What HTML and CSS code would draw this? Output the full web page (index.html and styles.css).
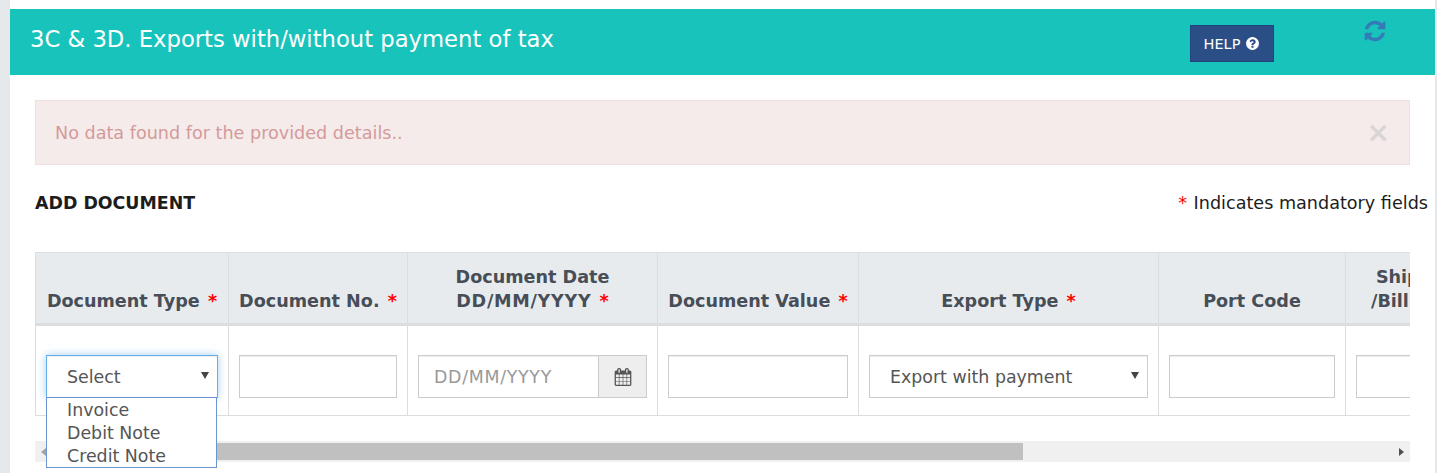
FILE: index.html
```html
<!DOCTYPE html>
<html lang="en">

<head>
    <meta charset="utf-8">
    <meta name="viewport" content="width=device-width, initial-scale=1.0">
    <title>Exports with/without payment of tax</title>
    <link rel="stylesheet" href="styles.css">
</head>

<body>
    <main class="panel">
        <header class="panel-head">
            <h1>3C &amp; 3D. Exports with/without payment of tax</h1>
            <button class="help-btn">HELP
                <svg class="help-icon" viewBox="0 0 1792 1792"><path fill="currentColor" d="M1024 1376v-192q0-14-9-23t-23-9h-192q-14 0-23 9t-9 23v192q0 14 9 23t23 9h192q14 0 23-9t9-23zm256-672q0-88-55.500-163t-138.500-116-170-41q-243 0-371 213-15 24 8 42l132 100q7 6 19 6 16 0 25-12 53-68 86-92 34-24 86-24 48 0 85.500 26t37.500 59q0 38-20 61t-68 45q-63 28-115.500 86.500t-52.500 125.500v36q0 14 9 23t23 9h192q14 0 23-9t9-23q0-19 21.500-49.500t54.500-49.500q32-18 49-28.500t46-35 44.500-48 28-60.500 12.500-81zm384 192q0 209-103 385.500t-279.500 279.500-385.500 103-385.500-103-279.500-279.500-103-385.500 103-385.500 279.500-279.500 385.500-103 385.500 103 279.500 279.500 103 385.500z"/></svg>
            </button>
            <svg class="refresh-icon" viewBox="0 0 1792 1792"><path fill="currentColor" d="M1639 1056q0 5-1 7-64 268-268 434.500t-478 166.500q-146 0-282.500-55t-243.500-157l-129 129q-19 19-45 19t-45-19-19-45v-448q0-26 19-45t45-19h448q26 0 45 19t19 45-19 45l-137 137q71 66 161 102t187 36q134 0 250-65t186-179q11-17 53-117 8-23 30-23h192q13 0 22.500 9.500t9.500 22.500zm25-800v448q0 26-19 45t-45 19h-448q-26 0-45-19t-19-45 19-45l138-138q-148-137-349-137-134 0-250 65t-186 179q-11 17-53 117-8 23-30 23h-199q-13 0-22.500-9.500t-9.500-22.500v-7q65-268 270-434.500t480-166.500q146 0 284 55.500t245 156.500l130-129q19-19 45-19t45 19 19 45z"/></svg>
        </header>

        <section class="content">
            <div class="alert">
                <span>No data found for the provided details..</span>
                <span class="alert-close">×</span>
            </div>

            <div class="form-title">
                <h2>ADD DOCUMENT</h2>
                <p><span class="req">*</span> Indicates mandatory fields</p>
            </div>

            <div class="table-wrap">
                <table class="doc-table">
                    <colgroup>
                        <col class="col-type">
                        <col class="col-no">
                        <col class="col-date">
                        <col class="col-value">
                        <col class="col-export">
                        <col class="col-port">
                        <col class="col-bill">
                    </colgroup>
                    <thead>
                        <tr>
                            <th>Document Type <span class="req">*</span></th>
                            <th>Document No. <span class="req">*</span></th>
                            <th>Document Date<br><span class="date-format">DD/MM/YYYY</span> <span class="req">*</span></th>
                            <th>Document Value <span class="req">*</span></th>
                            <th>Export Type <span class="req">*</span></th>
                            <th>Port Code</th>
                            <th>Shipping Bill<br>/Bill of Export</th>
                        </tr>
                    </thead>
                    <tbody>
                        <tr>
                            <td>
                                <div class="field select focused">Select<i class="caret"></i></div>
                            </td>
                            <td><input class="field" type="text"></td>
                            <td>
                                <div class="date-group">
                                    <input class="field" type="text" placeholder="DD/MM/YYYY">
                                    <span class="date-addon">
                                        <svg class="cal-icon" viewBox="0 0 1792 1792"><path fill="currentColor" d="M192 1664h288v-288h-288v288zm352 0h320v-288h-320v288zm-352-352h288v-320h-288v320zm352 0h320v-320h-320v320zm-352-384h288v-288h-288v288zm736 736h320v-288h-320v288zm-384-736h320v-288h-320v288zm768 736h288v-288h-288v288zm-384-352h320v-320h-320v320zm-352-864v-288q0-13-9.500-22.500t-22.500-9.500h-64q-13 0-22.500 9.500t-9.500 22.500v288q0 13 9.500 22.500t22.500 9.500h64q13 0 22.500-9.500t9.500-22.500zm736 864h288v-320h-288v320zm-384-384h320v-288h-320v288zm384 0h288v-288h-288v288zm32-480v-288q0-13-9.500-22.500t-22.500-9.500h-64q-13 0-22.500 9.500t-9.500 22.500v288q0 13 9.500 22.500t22.500 9.500h64q13 0 22.500-9.500t9.500-22.500zm384-64v1280q0 52-38 90t-90 38h-1408q-52 0-90-38t-38-90v-1280q0-52 38-90t90-38h128v-96q0-66 47-113t113-47h64q66 0 113 47t47 113v96h384v-96q0-66 47-113t113-47h64q66 0 113 47t47 113v96h128q52 0 90 38t38 90z"/></svg>
                                    </span>
                                </div>
                            </td>
                            <td><input class="field" type="text"></td>
                            <td>
                                <div class="field select">Export with payment<i class="caret"></i></div>
                            </td>
                            <td><input class="field" type="text"></td>
                            <td><input class="field" type="text"></td>
                        </tr>
                    </tbody>
                </table>
            </div>

            <div class="scrollbar">
                <span class="scroll-btn"><i class="arrow-left"></i></span>
                <div class="scroll-track"><div class="scroll-thumb"></div></div>
                <span class="scroll-btn"><i class="arrow-right"></i></span>
            </div>

            <ul class="dropdown">
                <li>Invoice</li>
                <li>Debit Note</li>
                <li>Credit Note</li>
            </ul>
        </section>
    </main>
</body>

</html>
```

FILE: styles.css
```css
* {
    box-sizing: border-box;
}

html,
body {
    height: 100%;
}

body {
    margin: 0;
    overflow: hidden;
    background-color: #e6e9ec;
    font-family: "DejaVu Sans", Verdana, sans-serif;
    color: #1c1c1c;
}

.panel {
    width: 1425px;
    height: 473px;
    margin-left: 10px;
    padding-top: 9px;
    background-color: #fff;
}

.panel-head {
    display: flex;
    align-items: flex-start;
    height: 66px;
    padding-left: 20px;
    background-color: #18c3bb;
    color: #fff;
}

.panel-head h1 {
    margin: 15px 0 0 0;
    font-size: 22.7px;
    font-weight: 400;
    line-height: 30px;
}

.help-btn {
    display: flex;
    align-items: center;
    justify-content: center;
    gap: 5px;
    width: 84px;
    height: 37px;
    margin: 16px 0 0 auto;
    padding: 0;
    border: 1px solid #21457c;
    border-radius: 0;
    background-color: #2c4e86;
    color: #fff;
    font-family: inherit;
    font-size: 14.5px;
}

.help-icon {
    width: 15px;
    height: 15px;
}

.refresh-icon {
    width: 24px;
    height: 24px;
    margin: 10px 48px 0 89px;
    color: #337ab7;
}

.content {
    position: relative;
    padding: 25px 25px 0;
}

.alert {
    display: flex;
    align-items: center;
    justify-content: space-between;
    height: 65px;
    padding: 0 19px 0 19px;
    border: 1px solid #f1dfdf;
    background-color: #f5ebeb;
    color: #d49a9a;
    font-size: 17.6px;
}

.alert-close {
    color: #d9d5d5;
    font-size: 28px;
    font-weight: 700;
    line-height: 1;
}

.form-title {
    display: flex;
    align-items: center;
    justify-content: space-between;
    height: 24px;
    margin: 26px -18px 37px 0;
}

.form-title h2 {
    margin: 0;
    font-size: 17.4px;
    font-weight: 700;
}

.form-title p {
    margin: 0;
    font-size: 17.6px;
}

.form-title .req {
    margin-right: 1px;
}

.req {
    color: #f00;
}

.table-wrap {
    overflow: hidden;
}

.doc-table {
    width: 1496px;
    border-collapse: collapse;
    table-layout: fixed;
}

.col-type {
    width: 193px;
}

.col-no {
    width: 179px;
}

.col-date {
    width: 250px;
}

.col-value {
    width: 201px;
}

.col-export {
    width: 300px;
}

.col-port {
    width: 187px;
}

.col-bill {
    width: 186px;
}

.doc-table th,
.doc-table td {
    border: 1px solid #ddd;
}

.doc-table th {
    height: 72px;
    padding: 8px 4px 10px;
    border-bottom-width: 3px;
    background-color: #e8ebee;
    color: #474e57;
    font-size: 17.6px;
    line-height: 24px;
    text-align: center;
    vertical-align: bottom;
    white-space: nowrap;
}

.doc-table th .req {
    margin-left: 2px;
}

.date-format {
    letter-spacing: .7px;
}

.doc-table td {
    height: 91px;
    padding: 29px 10px 17px;
}

.field {
    display: block;
    width: 100%;
    height: 43px;
    padding: 0 20px;
    border: 1px solid #ccc;
    border-radius: 0;
    background-color: #fff;
    box-shadow: inset 0 1px 1px rgba(0, 0, 0, .075);
    color: #555;
    font-family: inherit;
    font-size: 17.4px;
}

.field::placeholder {
    color: #999;
    letter-spacing: .7px;
}

.select {
    position: relative;
    line-height: 43px;
}

.focused {
    border-color: #66afe9;
    box-shadow: inset 0 1px 1px rgba(0, 0, 0, .075), 0 0 8px rgba(102, 175, 233, .6);
}

.caret {
    position: absolute;
    top: 16px;
    right: 8px;
    border-top: 7px solid #444;
    border-left: 4px solid transparent;
    border-right: 4px solid transparent;
}

.date-group {
    display: flex;
}

.date-group .field {
    flex: 1;
    min-width: 0;
    padding: 0 15px;
}

.date-addon {
    display: flex;
    align-items: center;
    justify-content: center;
    width: 48px;
    height: 43px;
    border: 1px solid #ccc;
    border-left: 0;
    background-color: #eee;
    color: #555;
}

.cal-icon {
    width: 18px;
    height: 18px;
}

.scrollbar {
    display: flex;
    height: 21px;
    margin-top: 25px;
    background-color: #f0f0f0;
}

.scroll-btn {
    display: flex;
    align-items: center;
    justify-content: center;
    width: 17px;
}

.arrow-left {
    border-right: 5px solid #a3a3a3;
    border-top: 4px solid transparent;
    border-bottom: 4px solid transparent;
}

.arrow-right {
    border-left: 5px solid #505050;
    border-top: 4px solid transparent;
    border-bottom: 4px solid transparent;
}

.scroll-track {
    flex: 1;
    padding: 2px 0;
}

.scroll-thumb {
    width: 971px;
    height: 17px;
    background-color: #c0c0c0;
}

.dropdown {
    position: absolute;
    top: 322px;
    left: 36px;
    width: 171px;
    height: 71px;
    margin: 0;
    padding: 1px 0 0 20px;
    border: 1px solid #6c93d6;
    background-color: #fff;
    color: #555;
    font-size: 17.4px;
    line-height: 23px;
    list-style: none;
}
```
